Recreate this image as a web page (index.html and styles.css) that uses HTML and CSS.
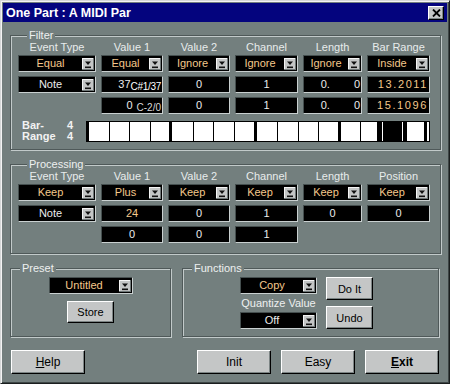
FILE: index.html
```html
<!DOCTYPE html>
<html lang="en">
<head>
  <meta charset="UTF-8">
  <meta name="viewport" content="width=device-width, initial-scale=1.0">
  <link rel="stylesheet" href="styles.css">
  <title>One Part : A MIDI Par</title>
</head>
<body>
  <svg class="defs" width="0" height="0">
    <symbol id="dd" viewBox="0 0 12 12">
      <rect width="12" height="12" fill="#6f7777"/>
      <rect width="11" height="11" fill="#f4f4f4"/>
      <rect x="1" y="1" width="10" height="10" fill="#c4c6c6"/>
      <path d="M3 3.5h6l-3 3.5z" fill="#111"/>
      <rect x="3" y="8.5" width="6" height="1.6" fill="#111"/>
    </symbol>
  </svg>

  <div class="window">
    <div class="titlebar">
      <span>One Part : A MIDI Par</span>
      <span class="close">
        <svg width="9" height="8" viewBox="0 0 9 8"><path d="M1 0.5L8 7.5M8 0.5L1 7.5" stroke="#000" stroke-width="1.8"/></svg>
      </span>
    </div>

    <div class="content">
      <!-- Filter -->
      <div class="group">
        <div class="group-title">Filter</div>
        <div class="grid">
          <div class="head">Event Type</div>
          <div class="head">Value 1</div>
          <div class="head">Value 2</div>
          <div class="head">Channel</div>
          <div class="head">Length</div>
          <div class="head">Bar Range</div>

          <div class="field drop tan"><span class="val">Equal</span><svg><use href="#dd"/></svg></div>
          <div class="field drop tan"><span class="val">Equal</span><svg><use href="#dd"/></svg></div>
          <div class="field drop tan"><span class="val">Ignore</span><svg><use href="#dd"/></svg></div>
          <div class="field drop tan"><span class="val">Ignore</span><svg><use href="#dd"/></svg></div>
          <div class="field drop tan"><span class="val">Ignore</span><svg><use href="#dd"/></svg></div>
          <div class="field drop tan"><span class="val">Inside</span><svg><use href="#dd"/></svg></div>

          <div class="field drop"><span class="val">Note</span><svg><use href="#dd"/></svg></div>
          <div class="field right"><span>37</span><span class="note tight">C#1/37</span></div>
          <div class="field">0</div>
          <div class="field">1</div>
          <div class="field right length"><span>0.</span><span>0</span></div>
          <div class="field right tan digits">13.2011</div>

          <div></div>
          <div class="field right"><span>0</span><span class="note">C-2/0</span></div>
          <div class="field">0</div>
          <div class="field">1</div>
          <div class="field right length"><span>0.</span><span>0</span></div>
          <div class="field right tan digits">15.1096</div>
        </div>

        <div class="bar-row">
          <div class="bar-label">
            <span>Bar-</span><span>4</span>
            <span>Range</span><span>4</span>
          </div>
          <svg class="strip" width="344" height="21" viewBox="0 0 344 21">
            <rect width="344" height="21" fill="#000"/>
            <rect x="3" y="1" width="340" height="19" fill="#fff"/>
            <g fill="#000">
              <rect x="23" y="0" width="1" height="21"/>
              <rect x="43" y="0" width="1" height="21"/>
              <rect x="64" y="0" width="1" height="21"/>
              <rect x="83" y="0" width="3" height="21"/>
              <rect x="107" y="0" width="1" height="21"/>
              <rect x="127" y="0" width="1" height="21"/>
              <rect x="148" y="0" width="1" height="21"/>
              <rect x="168" y="0" width="3" height="21"/>
              <rect x="191" y="0" width="1" height="21"/>
              <rect x="212" y="0" width="1" height="21"/>
              <rect x="232" y="0" width="1" height="21"/>
              <rect x="252" y="0" width="3" height="21"/>
              <rect x="274" y="0" width="1" height="21"/>
              <rect x="291" y="0" width="30" height="21"/>
              <rect x="338" y="0" width="3" height="21"/>
            </g>
            <rect x="296" y="1" width="1" height="19" fill="#fff"/>
            <rect x="316" y="1" width="1" height="19" fill="#fff"/>
          </svg>
        </div>
      </div>

      <!-- Processing -->
      <div class="group processing">
        <div class="group-title">Processing</div>
        <div class="grid">
          <div class="head">Event Type</div>
          <div class="head">Value 1</div>
          <div class="head">Value 2</div>
          <div class="head">Channel</div>
          <div class="head">Length</div>
          <div class="head">Position</div>

          <div class="field drop tan"><span class="val">Keep</span><svg><use href="#dd"/></svg></div>
          <div class="field drop tan"><span class="val">Plus</span><svg><use href="#dd"/></svg></div>
          <div class="field drop tan"><span class="val">Keep</span><svg><use href="#dd"/></svg></div>
          <div class="field drop tan"><span class="val">Keep</span><svg><use href="#dd"/></svg></div>
          <div class="field drop tan"><span class="val">Keep</span><svg><use href="#dd"/></svg></div>
          <div class="field drop tan"><span class="val">Keep</span><svg><use href="#dd"/></svg></div>

          <div class="field drop"><span class="val">Note</span><svg><use href="#dd"/></svg></div>
          <div class="field tan">24</div>
          <div class="field">0</div>
          <div class="field">1</div>
          <div class="field">0</div>
          <div class="field">0</div>

          <div></div>
          <div class="field">0</div>
          <div class="field">0</div>
          <div class="field">1</div>
        </div>
      </div>

      <div class="lower">
        <div class="group preset">
          <div class="group-title">Preset</div>
          <div class="field drop tan preset-dd"><span class="val">Untitled</span><svg><use href="#dd"/></svg></div>
          <button class="btn small store">Store</button>
        </div>

        <div class="group functions">
          <div class="group-title">Functions</div>
          <div class="func-body">
            <div class="func-left">
              <div class="field drop tan"><span class="val">Copy</span><svg><use href="#dd"/></svg></div>
              <div class="func-label">Quantize Value</div>
              <div class="field drop"><span class="val">Off</span><svg><use href="#dd"/></svg></div>
            </div>
            <div class="func-right">
              <button class="btn small">Do It</button>
              <button class="btn small">Undo</button>
            </div>
          </div>
        </div>
      </div>

      <div class="actions">
        <button class="btn big"><u>H</u>elp</button>
        <div class="actions-right">
          <button class="btn big">Init</button>
          <button class="btn big">Easy</button>
          <button class="btn big exit"><u>E</u>xit</button>
        </div>
      </div>
    </div>
  </div>
</body>
</html>
```

FILE: styles.css
```css
body {
  margin: 0;
  font-family: "Liberation Sans", Arial, sans-serif;
  background-color: #737f7e;
}

.defs {
  position: absolute;
}

.window {
  width: 450px;
  height: 384px;
  box-sizing: border-box;
  padding: 2px;
  background-color: #737f7e;
  border: 1px solid;
  border-color: #d6d8d8 #1a1e1e #1a1e1e #d6d8d8;
  box-shadow: inset 1px 1px 0 #f4f4f4, inset -1px -1px 0 #3e4646;
}

.titlebar {
  height: 19px;
  background-color: #04047e;
  color: #fff;
  font-size: 12.5px;
  font-weight: bold;
  display: flex;
  align-items: center;
  justify-content: space-between;
  padding: 0 3px;
}

.close {
  width: 16px;
  height: 14px;
  box-sizing: border-box;
  background-color: #c4c6c6;
  border: 1px solid;
  border-color: #fff #000 #000 #fff;
  box-shadow: inset -1px -1px 0 #7c8484;
  display: flex;
  align-items: center;
  justify-content: center;
}

.content {
  padding: 13px 6px 0 7px;
}

.group {
  border: 1px solid #4f5959;
  box-shadow: inset 1px 1px 0 #c2caca, 1px 1px 0 #c2caca;
  padding: 0 8px 7px 7px;
}

.group-title {
  display: table;
  margin: -8px 0 -2px 9px;
  padding: 0 2px;
  background-color: #737f7e;
  color: #eef0f0;
  font-size: 11px;
  line-height: 14px;
}

.grid {
  display: grid;
  grid-template-columns: 78px 62px 62px 63px 59px 63px;
  grid-template-rows: 11px 17px 17px 17px;
  column-gap: 5px;
  row-gap: 4px;
}

.head {
  font-size: 11px;
  line-height: 11px;
  padding-top: 2px;
  color: #e8ecec;
  text-align: center;
  white-space: nowrap;
}

.field {
  box-sizing: border-box;
  height: 17px;
  background-color: #000;
  border: 1px solid;
  border-color: #454f4f #c9d0d0 #c9d0d0 #454f4f;
  color: #ececec;
  font-size: 11px;
  line-height: 15px;
  display: flex;
  align-items: center;
  justify-content: center;
  white-space: nowrap;
}

.field.tan {
  color: #f4c88c;
}

.field.right {
  justify-content: flex-end;
  padding-right: 1px;
}

.drop .val {
  flex: 1;
  text-align: center;
}

.drop svg {
  width: 12px;
  height: 12px;
  margin-right: 1px;
  flex: none;
}

.note {
  font-size: 10px;
  margin-left: 4px;
  padding-top: 3px;
  color: #d8d8d8;
}

.note.tight {
  margin-left: 0;
  letter-spacing: -0.3px;
  color: #fff;
}

.length {
  gap: 24px;
}

.digits {
  letter-spacing: 1.6px;
}

.bar-row {
  display: flex;
  align-items: center;
  margin-top: 6px;
  padding-left: 4px;
}

.bar-label {
  width: 64px;
  display: grid;
  grid-template-columns: 45px 1fr;
  font-size: 11px;
  line-height: 11px;
  font-weight: bold;
  color: #f2f2f2;
}

.strip {
  display: block;
}

.processing {
  margin-top: 14px;
  padding-bottom: 10px;
}

.lower {
  display: flex;
  gap: 11px;
  margin-top: 14px;
}

.preset {
  width: 161px;
  height: 69px;
  box-sizing: border-box;
  padding: 0;
  display: flex;
  flex-direction: column;
  align-items: center;
}

.preset .group-title {
  align-self: flex-start;
  margin-bottom: 0;
}

.preset-dd {
  width: 84px;
  margin-top: 2px;
}

.store {
  width: 47px;
  height: 22px;
  margin-top: 7px;
}

.functions {
  width: 257px;
  height: 69px;
  box-sizing: border-box;
  padding: 0;
}

.functions .group-title {
  margin-bottom: 0;
}

.func-body {
  display: flex;
  gap: 9px;
  padding-left: 57px;
  margin-top: 2px;
}

.func-left {
  width: 77px;
  display: flex;
  flex-direction: column;
}

.func-label {
  font-size: 11px;
  line-height: 17px;
  padding-top: 1px;
  color: #eef0f0;
  text-align: center;
  white-space: nowrap;
}

.func-right {
  display: flex;
  flex-direction: column;
  gap: 6px;
}

.func-right .btn {
  width: 47px;
  height: 23px;
}

.btn {
  box-sizing: border-box;
  padding: 0;
  background-color: #c4c6c6;
  border: 1px solid;
  border-color: #fff #000 #000 #fff;
  box-shadow: inset -1px -1px 0 #7c8484;
  font-family: "Liberation Sans", Arial, sans-serif;
  font-size: 11px;
  color: #000;
}

.actions {
  display: flex;
  justify-content: space-between;
  margin-top: 13px;
  padding: 0 2px 0 1px;
}

.actions-right {
  display: flex;
  gap: 10px;
}

.btn.big {
  width: 74px;
  height: 24px;
  font-size: 12px;
}

.exit {
  font-weight: bold;
}
```
